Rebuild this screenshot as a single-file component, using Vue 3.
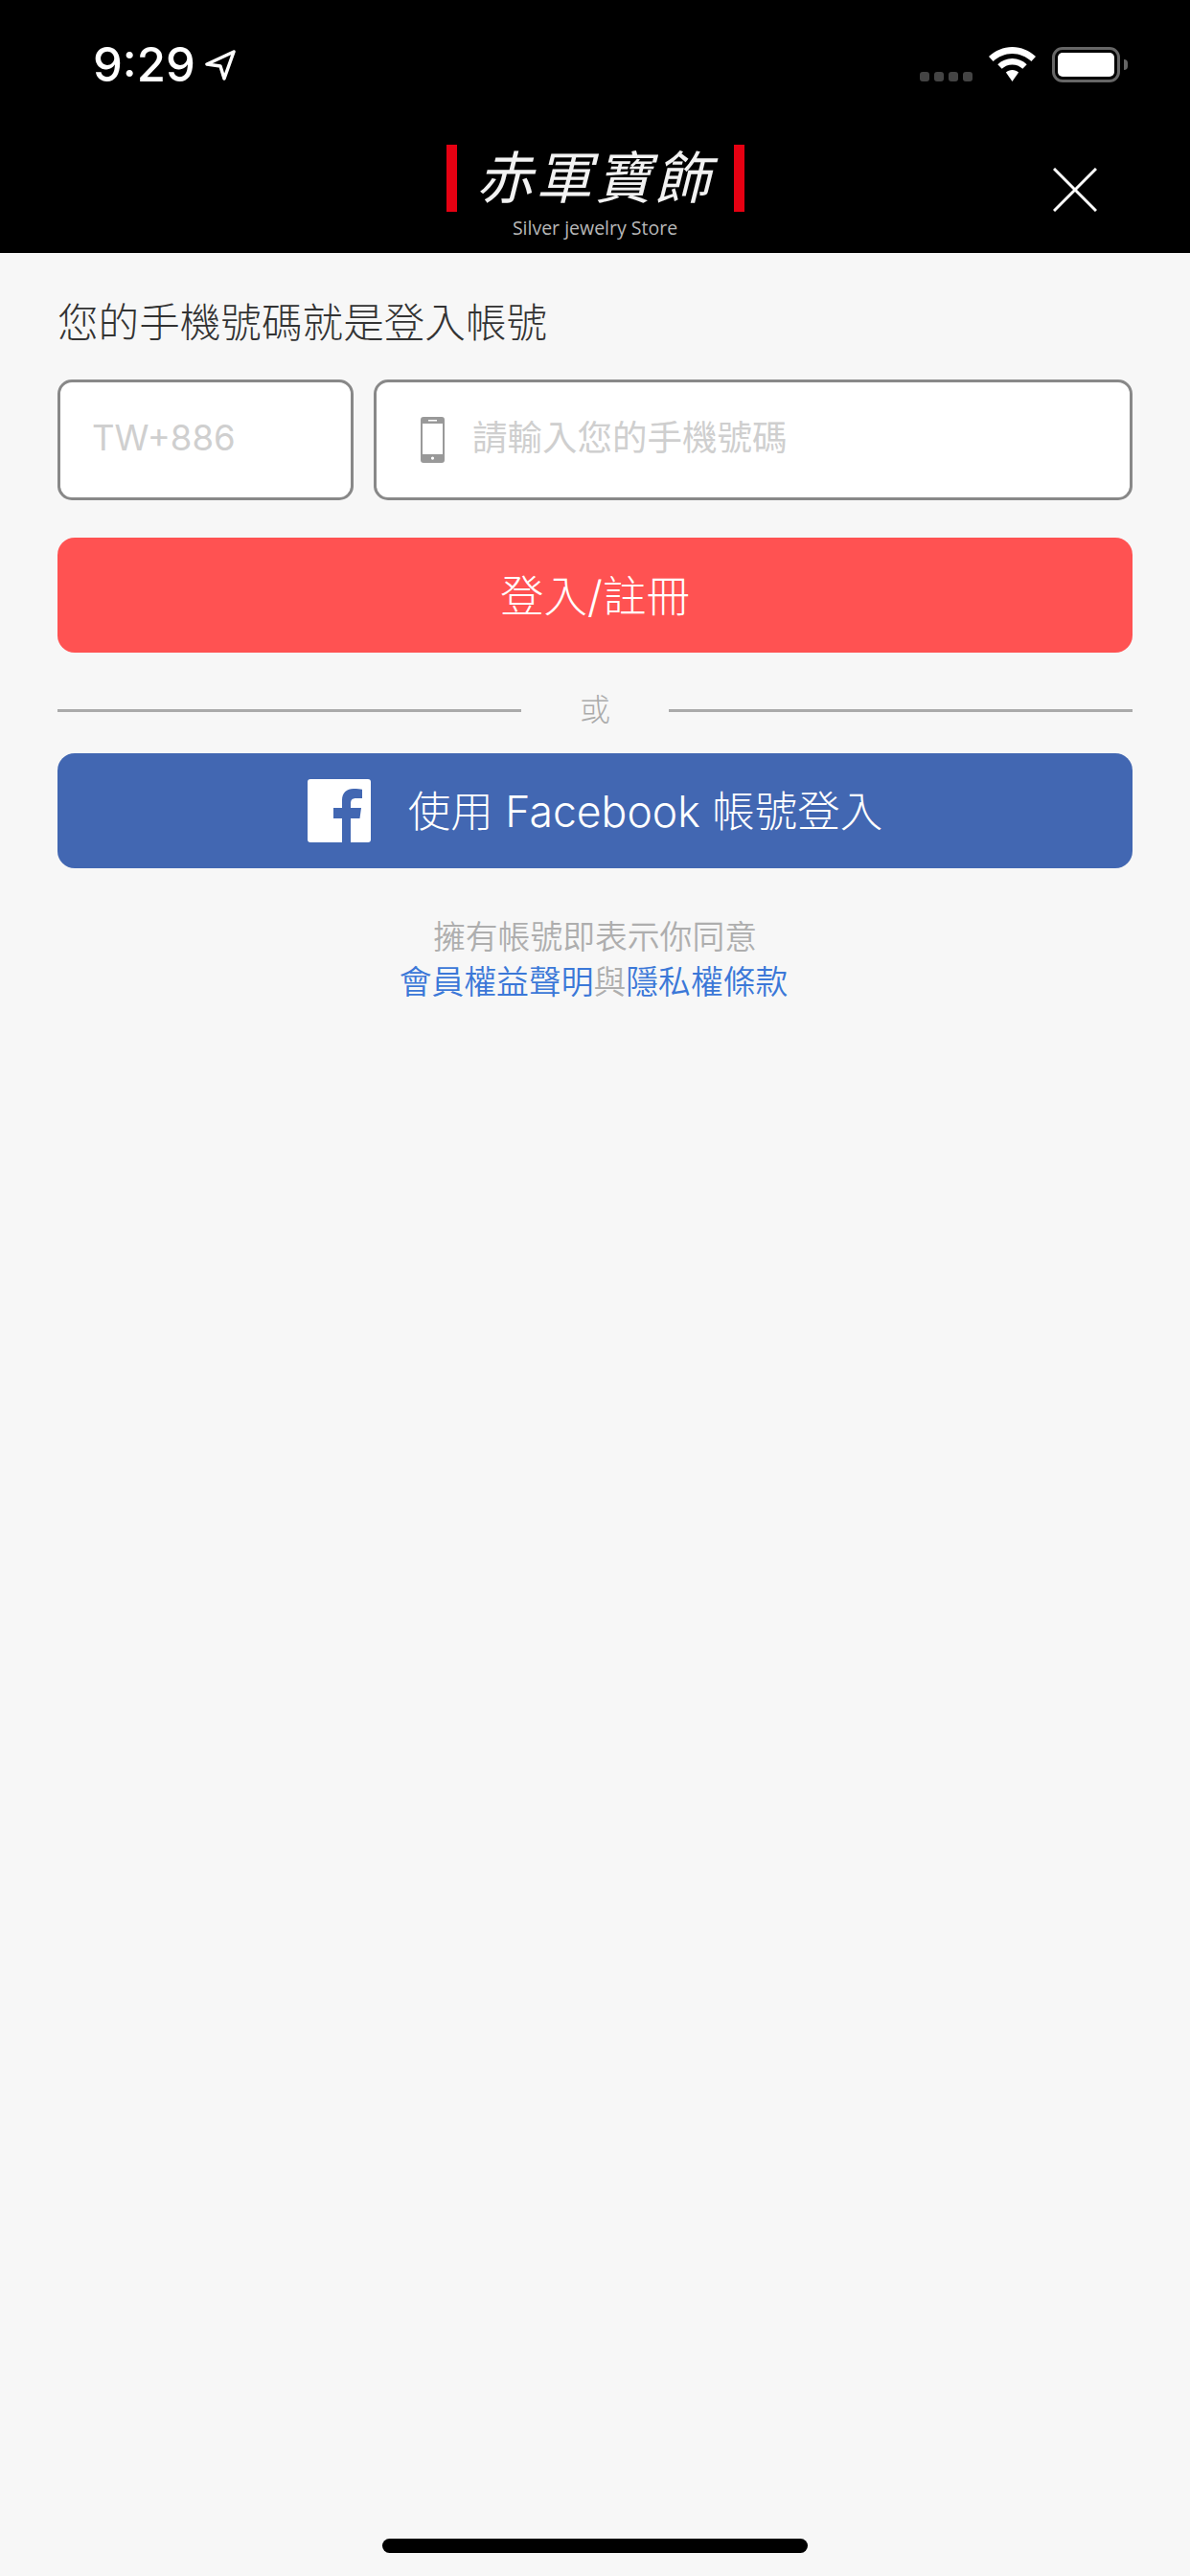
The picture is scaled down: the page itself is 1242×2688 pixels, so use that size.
<template>
  <div class="page">
    <header class="top">
      <div class="status">
        <div class="clock">
          <span class="time">9:29</span>
          <svg class="arrow" width="32" height="32" viewBox="0 0 32 32">
            <path d="M30 2 L2 15 L16 17 L20 30 Z" fill="none" stroke="#fff" stroke-width="3.500" stroke-linejoin="round" />
          </svg>
        </div>
        <div class="indicators">
          <div class="signal">
            <i v-for="n in 4" :key="n"></i>
          </div>
          <svg class="wifi" width="49" height="36" viewBox="0 0 49 36">
            <path d="M24.5 0 C15 0 7 3.8 0 10 L4.6 15 C10 10 17 7 24.5 7 C32 7 39 10 44.4 15 L49 10 C42 3.8 34 0 24.5 0 Z" fill="#fff" />
            <path d="M24.5 12 C18.500 12 13.500 14.300 9.300 18.200 L13.700 22.800 C16.700 20 20.400 18.500 24.500 18.500 C28.600 18.500 32.300 20 35.300 22.800 L39.700 18.200 C35.500 14.300 30.500 12 24.500 12 Z" fill="#fff" />
            <path d="M24.500 24 C21.900 24 19.600 25 17.900 26.600 L24.500 36 L31.100 26.600 C29.400 25 27.100 24 24.500 24 Z" fill="#fff" />
          </svg>
          <div class="battery">
            <div class="level"></div>
          </div>
        </div>
      </div>
      <div class="nav">
        <div class="logo">
          <i class="bar"></i>
          <div class="brand">
            <span class="cn">赤軍寶飾</span>
            <span class="en">Silver jewelry Store</span>
          </div>
          <i class="bar"></i>
        </div>
        <button class="close" aria-label="close">
          <svg width="46" height="46" viewBox="0 0 46 46">
            <path d="M1 1 L45 45 M45 1 L1 45" stroke="#fff" stroke-width="3" fill="none" />
          </svg>
        </button>
      </div>
    </header>

    <main class="content">
      <h1 class="title">您的手機號碼就是登入帳號</h1>
      <div class="fields">
        <div class="field code">
          <input placeholder="TW+886" readonly />
        </div>
        <div class="field phone">
          <svg class="phone-icon" width="25" height="48" viewBox="0 0 25 48">
            <path fill="#999" fill-rule="evenodd" d="M3 0 H22 A3 3 0 0 1 25 3 V45 A3 3 0 0 1 22 48 H3 A3 3 0 0 1 0 45 V3 A3 3 0 0 1 3 0 Z M2 7 V39 H23 V7 Z M8 3 V4.500 H17 V3 Z M12.500 41.500 A1.600 1.600 0 1 0 12.500 44.700 A1.600 1.600 0 1 0 12.500 41.500 Z" />
          </svg>
          <input placeholder="請輸入您的手機號碼" readonly />
        </div>
      </div>
      <button class="btn login"><span>登入/註冊</span></button>
      <div class="divider">
        <i></i>
        <span>或</span>
        <i></i>
      </div>
      <button class="btn facebook">
        <svg width="66" height="66" viewBox="0 0 66 66">
          <rect width="66" height="66" rx="3" fill="#fff" />
          <path fill="#4267b2" d="M36 66 V41 H27 V30 H36 V22 C36 14 41 10 48 10 C52 10 55 10.400 57 10.700 V20 H51 C46 20 45 22 45 26 V30 H56 L54.500 41 H45 V66 Z" />
        </svg>
        <span>使用 Facebook 帳號登入</span>
      </button>
      <div class="terms">
        <div>擁有帳號即表示你同意</div>
        <div class="links"><a>會員權益聲明</a>與<a>隱私權條款</a></div>
      </div>
    </main>

    <div class="home-bar"></div>
  </div>
</template>

<script setup>
</script>

<style>
html, body { margin: 0; background: #f7f7f7; }
</style>

<style scoped>
.page {
  position: relative;
  height: 2688px;
  overflow: hidden;
  background: #f7f7f7;
  font-family: Inter, "Noto Sans CJK TC", sans-serif;
}
.top { background: #000; height: 264px; }
.status { height: 132px; display: flex; justify-content: space-between; align-items: flex-start; padding: 0 65px 0 97px; box-sizing: border-box; }
.clock { display: flex; align-items: center; gap: 10px; margin-top: 44px; height: 48px; }
.time { color: #fff; font-size: 49px; font-weight: 500; line-height: 48px; }
.arrow { display: block; }
.indicators { display: flex; align-items: flex-start; margin-top: 49px; }
.signal { display: flex; gap: 5px; margin-top: 26px; margin-right: 17px; }
.signal i { width: 10px; height: 10px; border-radius: 3px; background: #444; display: block; }
.wifi { display: block; margin-right: 17px; }
.battery { position: relative; width: 71px; height: 37px; margin-right: 8px; box-sizing: border-box; border: 3px solid #666; border-radius: 11px; padding: 3px; }
.battery::after { content: ""; position: absolute; right: -11px; top: 10px; width: 4px; height: 11px; background: #666; border-radius: 0 6px 6px 0; }
.level { height: 100%; background: #fff; border-radius: 5px; }
.nav { height: 132px; display: flex; justify-content: center; position: relative; }
.logo { display: flex; gap: 19px; align-items: flex-start; margin-top: 19px; }
.bar { display: block; width: 11px; height: 70px; background: #e60012; }
.brand { display: flex; flex-direction: column; align-items: center; width: 251px; }
.cn { color: #f2f2f2; font-size: 59px; line-height: 70px; letter-spacing: 3px; font-weight: 400; white-space: nowrap; font-style: italic; }
.en { color: #b8b8b8; font-family: "Open Sans", sans-serif; font-size: 19.500px; line-height: 24px; margin-top: 5px; white-space: nowrap; }
.close { position: absolute; right: 97px; top: 43px; padding: 0; border: 0; background: none; width: 46px; height: 46px; }
.close svg { display: block; }
.content { padding: 43px 60px 0; }
.title { margin: 0; font-size: 42.600px; line-height: 60px; font-weight: 300; color: #333; white-space: nowrap; }
.fields { display: flex; gap: 21px; margin-top: 29px; }
.field { height: 126px; box-sizing: border-box; border: 3px solid #888; border-radius: 15px; background: #fff; display: flex; align-items: center; }
.code { width: 309px; padding-left: 33px; }
.phone { flex: 1; padding-left: 46px; }
.phone-icon { flex: none; margin-right: 29px; }
input { border: 0; outline: 0; background: none; padding: 0 0 4px; width: 100%; font: inherit; font-size: 36.500px; color: #333; }
input::placeholder { color: #cfcfcf; opacity: 1; }
.btn { display: flex; align-items: center; justify-content: center; width: 100%; height: 120px; border: 0; border-radius: 18px; color: #fff; font-family: inherit; font-weight: 300; padding: 0; }
.btn span { margin-top: -5px; }
.login { background: #ff5252; margin-top: 39px; font-size: 45.500px; }
.divider { display: flex; align-items: center; height: 50px; margin-top: 35px; }
.divider i { flex: 1; height: 3px; background: #aaa; display: block; }
.divider span { width: 154px; text-align: center; color: #aaa; font-size: 32px; font-weight: 300; line-height: 50px; }
.facebook { background: #4267b2; margin-top: 20px; gap: 39px; font-size: 44.500px; }
.terms { margin-top: 48px; text-align: center; font-size: 33.800px; line-height: 47px; color: #aeaeae; font-weight: 350; }
.links { padding-right: 3px; }
.terms a { color: #3b78d8; font-weight: 350; }
.home-bar { position: absolute; left: 399px; bottom: 24px; width: 444px; height: 15px; border-radius: 8px; background: #000; }
</style>
